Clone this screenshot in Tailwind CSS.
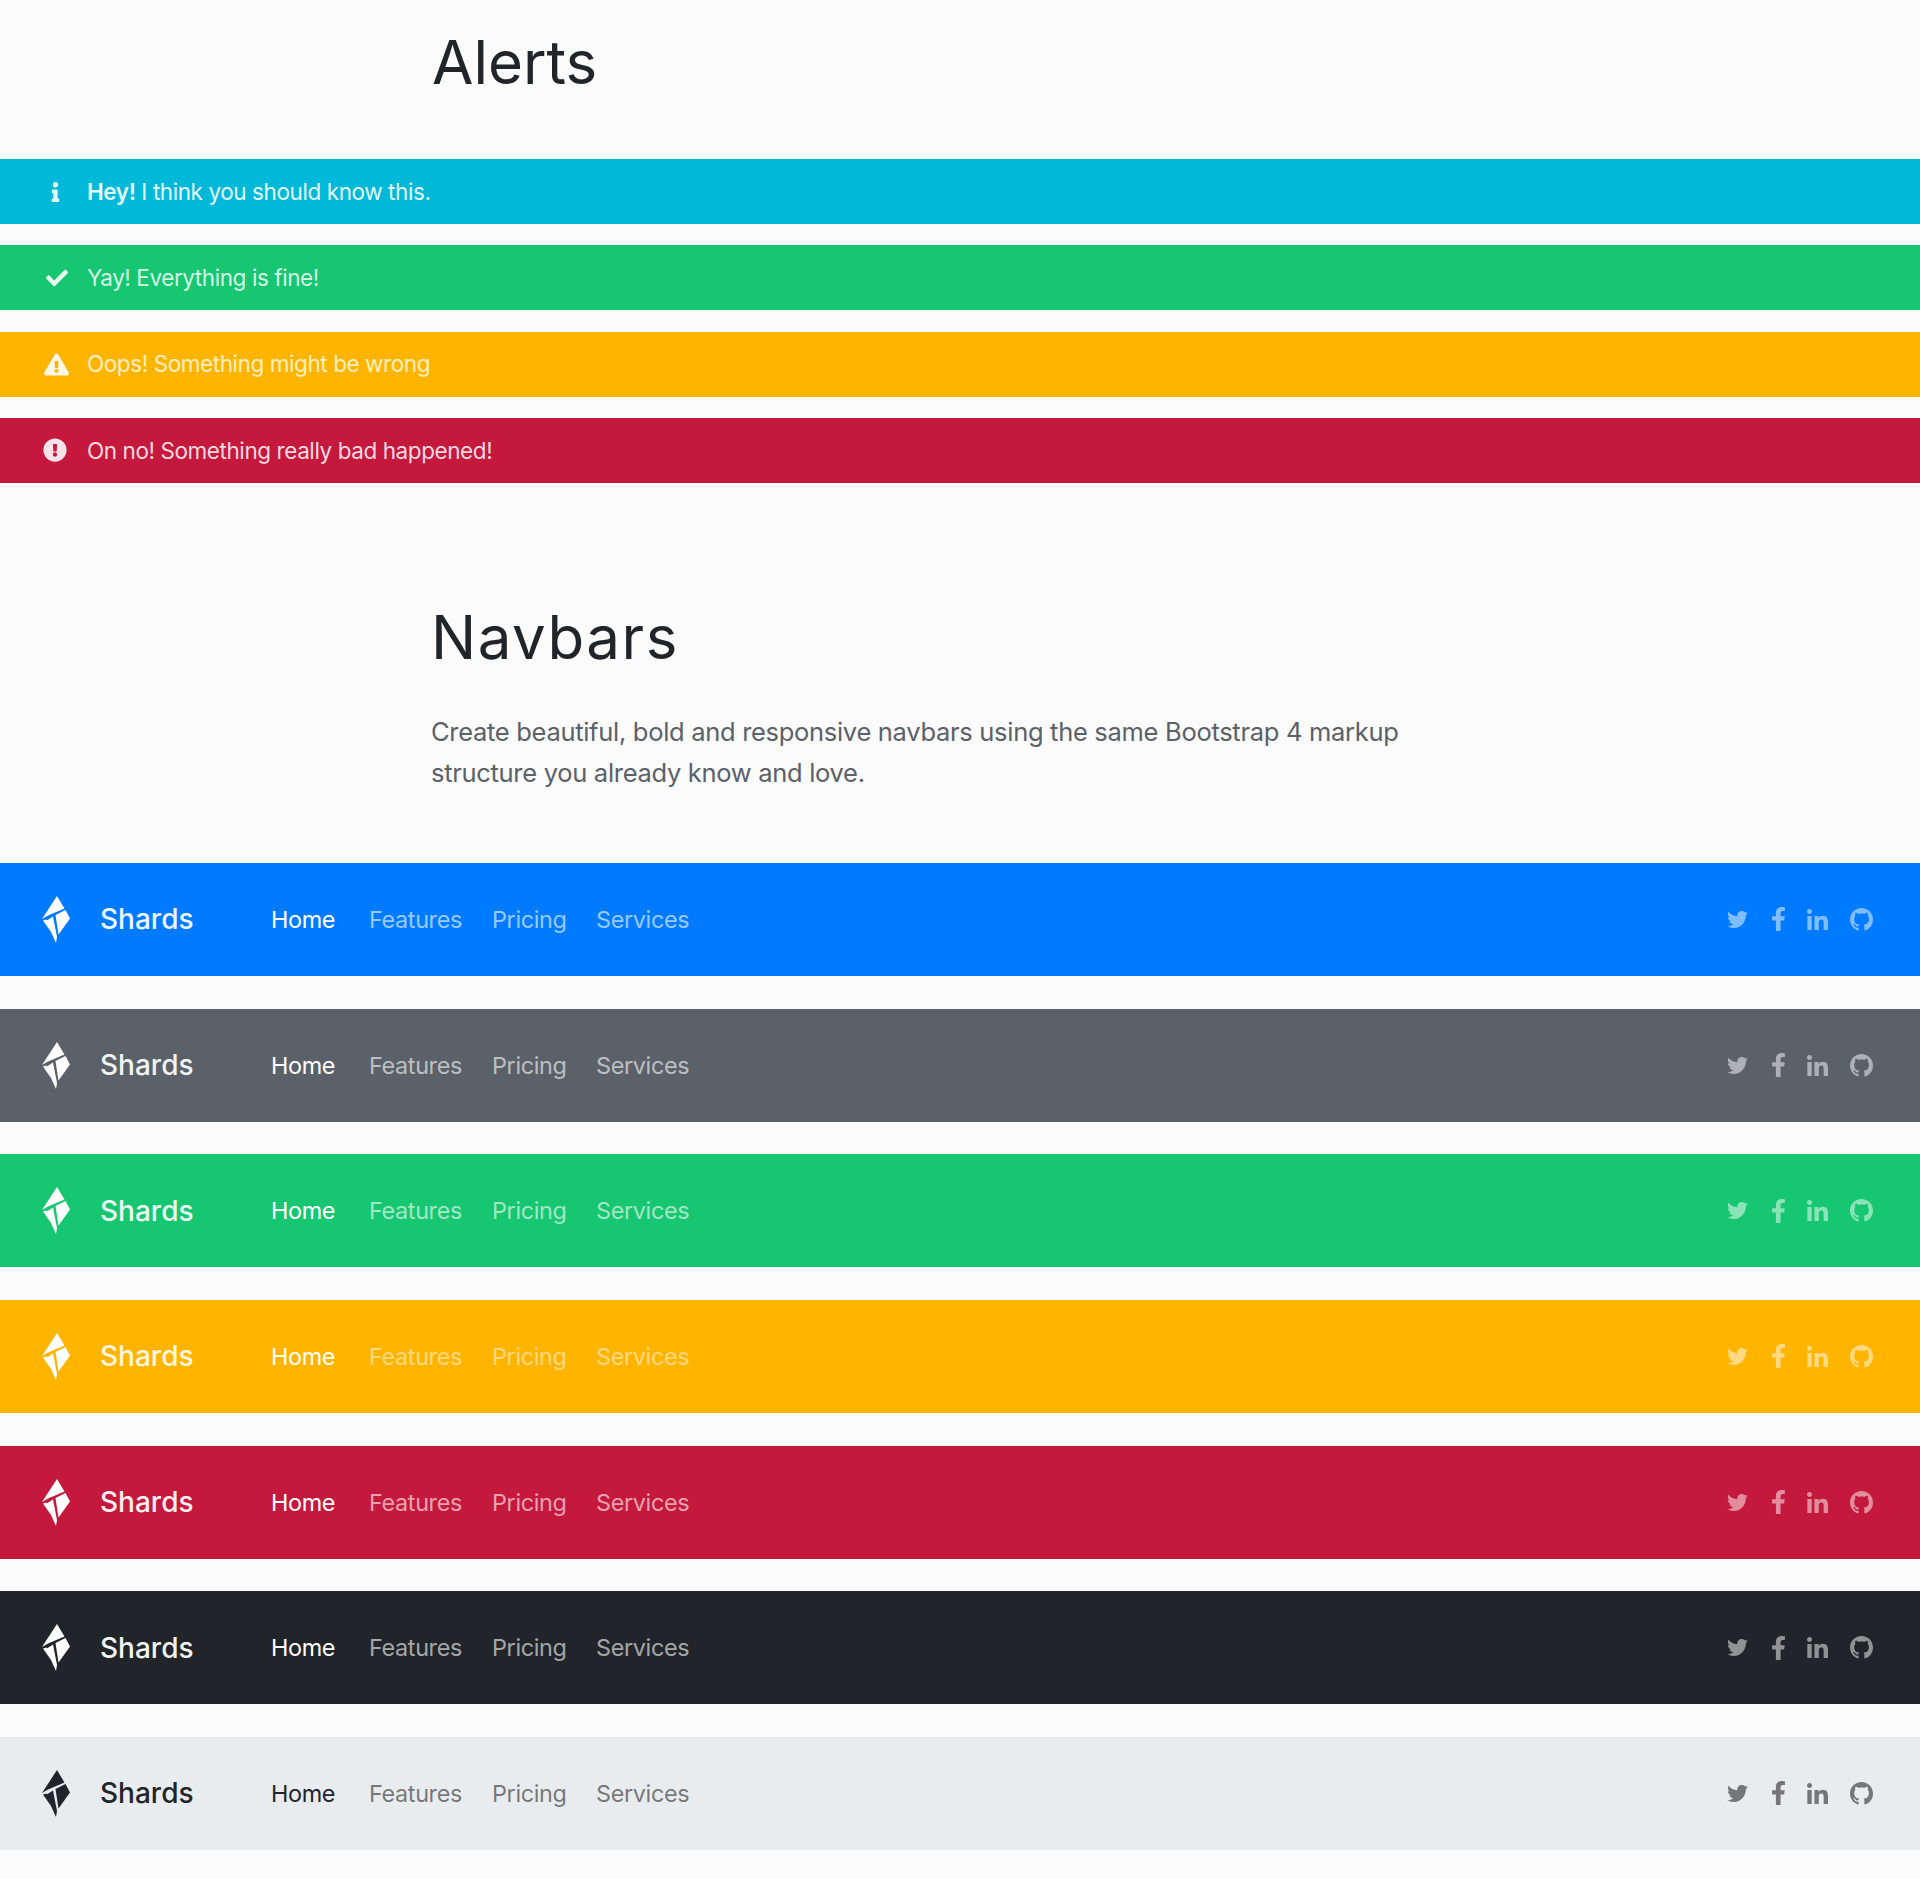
<!DOCTYPE html>
<html lang="en">
<head>
  <meta charset="UTF-8" />
  <title>Shards - Alerts and Navbars</title>
  <script src="https://cdn.jsdelivr.net/npm/@tailwindcss/browser@4"></script>
</head>
<body class="bg-[#fbfbfb] font-['Inter',sans-serif] h-[1879px] overflow-hidden">

<svg class="hidden">
  <symbol id="logo" viewBox="0 0 28 47">
    <path d="M15 0L22.5 12.5L6 19.5L0 23Z"/>
    <path d="M23.5 14L28 22.5L16.5 38.5L13.5 19Z"/>
    <path d="M11 20.5L15 41L14 47L4 25Z"/>
    <path d="M1 24.5L4.5 23.5L9 36Z"/>
  </symbol>
  <symbol id="twitter" viewBox="0 0 512 512"><path d="M459.37 151.716c.325 4.548.325 9.097.325 13.645 0 138.72-105.583 298.558-298.558 298.558-59.452 0-114.68-17.219-161.137-47.106 8.447.974 16.568 1.299 25.34 1.299 49.055 0 94.213-16.568 130.274-44.832-46.132-.975-84.792-31.188-98.112-72.772 6.498.974 12.995 1.624 19.818 1.624 9.421 0 18.843-1.3 27.614-3.573-48.081-9.747-84.143-51.98-84.143-102.985v-1.299c13.969 7.797 30.214 12.67 47.431 13.319-28.264-18.843-46.781-51.005-46.781-87.391 0-19.492 5.197-37.36 14.294-52.954 51.655 63.675 129.3 105.258 216.365 109.807-1.624-7.797-2.599-15.918-2.599-24.04 0-57.828 46.782-104.934 104.934-104.934 30.213 0 57.502 12.67 76.67 33.137 23.715-4.548 46.456-13.32 66.599-25.34-7.798 24.366-24.366 44.833-46.132 57.827 21.117-2.273 41.584-8.122 60.426-16.243-14.292 20.791-32.161 39.308-52.628 54.253z"/></symbol>
  <symbol id="facebook" viewBox="0 0 320 512"><path d="M279.14 288l14.22-92.66h-88.91v-60.13c0-25.35 12.42-50.06 52.24-50.06h40.42V6.26S260.43 0 225.36 0c-73.22 0-121.08 44.38-121.08 124.72v70.62H22.89V288h81.39v224h100.17V288z"/></symbol>
  <symbol id="linkedin" viewBox="0 0 448 448"><path d="M100.28 448H7.4V148.9h92.88zM53.79 108.1C24.09 108.1 0 83.5 0 53.8a53.79 53.79 0 0 1 107.58 0c0 29.7-24.1 54.3-53.79 54.3zM447.9 448h-92.68V302.4c0-34.7-.7-79.2-48.29-79.2-48.29 0-55.69 37.7-55.69 76.7V448h-92.78V148.9h89.08v40.8h1.3c12.4-23.5 42.69-48.3 87.88-48.3 94 0 111.28 61.9 111.28 142.3V448z"/></symbol>
  <symbol id="github" viewBox="0 0 16 16"><path d="M8 0C3.58 0 0 3.58 0 8c0 3.54 2.29 6.53 5.47 7.59.4.07.55-.17.55-.38 0-.19-.01-.82-.01-1.49-2.01.37-2.53-.49-2.69-.94-.09-.23-.48-.94-.82-1.13-.28-.15-.68-.52-.01-.53.63-.01 1.08.58 1.23.82.72 1.21 1.87.87 2.33.66.07-.52.28-.87.51-1.07-1.78-.2-3.64-.89-3.64-3.95 0-.87.31-1.59.82-2.15-.08-.2-.36-1.02.08-2.12 0 0 .67-.21 2.2.82.64-.18 1.32-.27 2-.27.68 0 1.36.09 2 .27 1.53-1.04 2.2-.82 2.2-.82.44 1.1.16 1.92.08 2.12.51.56.82 1.27.82 2.15 0 3.07-1.87 3.75-3.65 3.95.29.25.54.73.54 1.48 0 1.07-.01 1.93-.01 2.2 0 .21.15.46.55.38A8.013 8.013 0 0016 8c0-4.42-3.58-8-8-8z"/></symbol>
</svg>

<!-- Alerts -->
<h1 class="pl-[432px] pt-[26px] h-[159px] text-[60px] leading-[72px] text-[#212529]">Alerts</h1>

<div class="flex flex-col gap-[21.33px] text-[22.5px] tracking-[-0.42px]">
  <div class="h-[65px] bg-[#00b8d8] text-[#e6f9fc] flex items-center">
    <div class="w-[87px] pl-[50px]">
      <svg class="w-[11px] h-[20px] fill-[#e6f9fc]" viewBox="0 0 192 512"><path d="M20 424.229h20V279.771H20c-11.046 0-20-8.954-20-20V212c0-11.046 8.954-20 20-20h112c11.046 0 20 8.954 20 20v212.229h20c11.046 0 20 8.954 20 20V492c0 11.046-8.954 20-20 20H20c-11.046 0-20-8.954-20-20v-47.771c0-11.046 8.954-20 20-20zM96 0C56.235 0 24 32.235 24 72s32.235 72 72 72 72-32.235 72-72S135.764 0 96 0z"/></svg>
    </div>
    <p><strong class="font-semibold">Hey!</strong> I think you should know this.</p>
  </div>
  <div class="h-[65px] bg-[#17c671] text-[#d5f6e5] flex items-center">
    <div class="w-[87px] pl-[46px]">
      <svg class="w-[22px] h-[22px] fill-[#e8fbf1]" viewBox="0 0 512 512"><path d="M173.898 439.404l-166.4-166.4c-9.997-9.997-9.997-26.206 0-36.204l36.203-36.204c9.997-9.998 26.207-9.998 36.204 0L192 312.69 432.095 72.596c9.997-9.997 26.207-9.997 36.204 0l36.203 36.204c9.997 9.997 9.997 26.206 0 36.204l-294.4 294.401c-9.998 9.997-26.207 9.997-36.204-.001z"/></svg>
    </div>
    <p>Yay! Everything is fine!</p>
  </div>
  <div class="h-[65px] bg-[#ffb400] text-[#fff0c4] flex items-center">
    <div class="w-[87px] pl-[44px]">
      <svg class="w-[25px] h-[23px] fill-[#fff8e6]" viewBox="0 0 576 512"><path d="M569.517 440.013C587.975 472.007 564.806 512 527.94 512H48.054c-36.937 0-59.999-40.055-41.577-71.987L246.423 24.035c18.467-32.009 64.72-31.951 83.154 0l239.94 416.178zM288 354c-25.405 0-46 20.595-46 46s20.595 46 46 46 46-20.595 46-46-20.595-46-46-46zm-43.673-165.346l7.418 136c.347 6.364 5.609 11.346 11.982 11.346h48.546c6.373 0 11.635-4.982 11.982-11.346l7.418-136c.375-6.874-5.098-12.654-11.982-12.654h-63.383c-6.884 0-12.356 5.78-11.981 12.654z"/></svg>
    </div>
    <p>Oops! Something might be wrong</p>
  </div>
  <div class="h-[65px] bg-[#c4183c] text-[#f9d9e0] flex items-center">
    <div class="w-[87px] pl-[43px]">
      <svg class="w-[24px] h-[24px] fill-[#f9e3e8]" viewBox="0 0 512 512"><path d="M504 256c0 136.997-111.043 248-248 248S8 392.997 8 256C8 119.083 119.043 8 256 8s248 111.083 248 248zm-248 50c-25.405 0-46 20.595-46 46s20.595 46 46 46 46-20.595 46-46-20.595-46-46-46zm-43.673-165.346l7.418 136c.347 6.364 5.609 11.346 11.982 11.346h48.546c6.373 0 11.635-4.982 11.982-11.346l7.418-136c.375-6.874-5.098-12.654-11.982-12.654h-63.383c-6.884 0-12.356 5.78-11.981 12.654z"/></svg>
    </div>
    <p>On no! Something really bad happened!</p>
  </div>
</div>

<!-- Navbars intro -->
<section class="pl-[431px] pt-[118px] h-[380px]">
  <h1 class="text-[60px] leading-[72px] text-[#212529] tracking-[1.5px]">Navbars</h1>
  <p class="mt-[38px] w-[1000px] text-[25.5px] leading-[41px] text-[#5a6169] tracking-[-0.3px]">Create beautiful, bold and responsive navbars using the same Bootstrap 4 markup<br>structure you already know and love.</p>
</section>

<div class="flex flex-col gap-[32.67px]">
  <!-- Primary -->
  <nav class="h-[113px] bg-[#007bff] flex items-center text-white">
    <svg class="ml-[42px] w-[28px] h-[47px] fill-white"><use href="#logo"/></svg>
    <a class="ml-[30px] w-[171px] text-[28px] font-medium text-[#eef6ff]">Shards</a>
    <ul class="flex items-center text-[23.4px] tracking-[-0.35px] text-white/60">
      <li class="w-[98px] text-white">Home</li>
      <li class="w-[123px]">Features</li>
      <li class="w-[104px]">Pricing</li>
      <li>Services</li>
    </ul>
    <div class="ml-auto mr-[47px] flex items-center fill-white/50">
      <svg class="w-[21px] h-[21px]"><use href="#twitter"/></svg>
      <svg class="ml-[23px] w-[15px] h-[24px]"><use href="#facebook"/></svg>
      <svg class="ml-[20px] w-[23px] h-[21px]"><use href="#linkedin"/></svg>
      <svg class="ml-[21px] w-[23px] h-[23px]"><use href="#github"/></svg>
    </div>
  </nav>
  <!-- Secondary -->
  <nav class="h-[113px] bg-[#5a6169] flex items-center text-white">
    <svg class="ml-[42px] w-[28px] h-[47px] fill-white"><use href="#logo"/></svg>
    <a class="ml-[30px] w-[171px] text-[28px] font-medium text-[#f3f4f5]">Shards</a>
    <ul class="flex items-center text-[23.4px] tracking-[-0.35px] text-white/60">
      <li class="w-[98px] text-white">Home</li>
      <li class="w-[123px]">Features</li>
      <li class="w-[104px]">Pricing</li>
      <li>Services</li>
    </ul>
    <div class="ml-auto mr-[47px] flex items-center fill-white/50">
      <svg class="w-[21px] h-[21px]"><use href="#twitter"/></svg>
      <svg class="ml-[23px] w-[15px] h-[24px]"><use href="#facebook"/></svg>
      <svg class="ml-[20px] w-[23px] h-[21px]"><use href="#linkedin"/></svg>
      <svg class="ml-[21px] w-[23px] h-[23px]"><use href="#github"/></svg>
    </div>
  </nav>
  <!-- Success -->
  <nav class="h-[113px] bg-[#17c671] flex items-center text-white">
    <svg class="ml-[42px] w-[28px] h-[47px] fill-white"><use href="#logo"/></svg>
    <a class="ml-[30px] w-[171px] text-[28px] font-medium text-[#eefbf4]">Shards</a>
    <ul class="flex items-center text-[23.4px] tracking-[-0.35px] text-white/60">
      <li class="w-[98px] text-white">Home</li>
      <li class="w-[123px]">Features</li>
      <li class="w-[104px]">Pricing</li>
      <li>Services</li>
    </ul>
    <div class="ml-auto mr-[47px] flex items-center fill-white/50">
      <svg class="w-[21px] h-[21px]"><use href="#twitter"/></svg>
      <svg class="ml-[23px] w-[15px] h-[24px]"><use href="#facebook"/></svg>
      <svg class="ml-[20px] w-[23px] h-[21px]"><use href="#linkedin"/></svg>
      <svg class="ml-[21px] w-[23px] h-[23px]"><use href="#github"/></svg>
    </div>
  </nav>
  <!-- Warning -->
  <nav class="h-[113px] bg-[#ffb400] flex items-center text-white">
    <svg class="ml-[42px] w-[28px] h-[47px] fill-white"><use href="#logo"/></svg>
    <a class="ml-[30px] w-[171px] text-[28px] font-medium text-[#fff7e2]">Shards</a>
    <ul class="flex items-center text-[23.4px] tracking-[-0.35px] text-white/50">
      <li class="w-[98px] text-white">Home</li>
      <li class="w-[123px]">Features</li>
      <li class="w-[104px]">Pricing</li>
      <li>Services</li>
    </ul>
    <div class="ml-auto mr-[47px] flex items-center fill-white/50">
      <svg class="w-[21px] h-[21px]"><use href="#twitter"/></svg>
      <svg class="ml-[23px] w-[15px] h-[24px]"><use href="#facebook"/></svg>
      <svg class="ml-[20px] w-[23px] h-[21px]"><use href="#linkedin"/></svg>
      <svg class="ml-[21px] w-[23px] h-[23px]"><use href="#github"/></svg>
    </div>
  </nav>
  <!-- Danger -->
  <nav class="h-[113px] bg-[#c4183c] flex items-center text-white">
    <svg class="ml-[42px] w-[28px] h-[47px] fill-white"><use href="#logo"/></svg>
    <a class="ml-[30px] w-[171px] text-[28px] font-medium text-[#fbeef1]">Shards</a>
    <ul class="flex items-center text-[23.4px] tracking-[-0.35px] text-white/60">
      <li class="w-[98px] text-white">Home</li>
      <li class="w-[123px]">Features</li>
      <li class="w-[104px]">Pricing</li>
      <li>Services</li>
    </ul>
    <div class="ml-auto mr-[47px] flex items-center fill-white/50">
      <svg class="w-[21px] h-[21px]"><use href="#twitter"/></svg>
      <svg class="ml-[23px] w-[15px] h-[24px]"><use href="#facebook"/></svg>
      <svg class="ml-[20px] w-[23px] h-[21px]"><use href="#linkedin"/></svg>
      <svg class="ml-[21px] w-[23px] h-[23px]"><use href="#github"/></svg>
    </div>
  </nav>
  <!-- Dark -->
  <nav class="h-[113px] bg-[#212529] flex items-center text-white">
    <svg class="ml-[42px] w-[28px] h-[47px] fill-white"><use href="#logo"/></svg>
    <a class="ml-[30px] w-[171px] text-[28px] font-medium text-[#f3f4f5]">Shards</a>
    <ul class="flex items-center text-[23.4px] tracking-[-0.35px] text-white/60">
      <li class="w-[98px] text-white">Home</li>
      <li class="w-[123px]">Features</li>
      <li class="w-[104px]">Pricing</li>
      <li>Services</li>
    </ul>
    <div class="ml-auto mr-[47px] flex items-center fill-white/50">
      <svg class="w-[21px] h-[21px]"><use href="#twitter"/></svg>
      <svg class="ml-[23px] w-[15px] h-[24px]"><use href="#facebook"/></svg>
      <svg class="ml-[20px] w-[23px] h-[21px]"><use href="#linkedin"/></svg>
      <svg class="ml-[21px] w-[23px] h-[23px]"><use href="#github"/></svg>
    </div>
  </nav>
  <!-- Light -->
  <nav class="h-[113px] bg-[#e9ecef] flex items-center text-[#212529]">
    <svg class="ml-[42px] w-[28px] h-[47px] fill-[#212529]"><use href="#logo"/></svg>
    <a class="ml-[30px] w-[171px] text-[28px] font-medium">Shards</a>
    <ul class="flex items-center text-[23.4px] tracking-[-0.35px] text-black/50">
      <li class="w-[98px] text-[#212529]">Home</li>
      <li class="w-[123px]">Features</li>
      <li class="w-[104px]">Pricing</li>
      <li>Services</li>
    </ul>
    <div class="ml-auto mr-[47px] flex items-center fill-black/50">
      <svg class="w-[21px] h-[21px]"><use href="#twitter"/></svg>
      <svg class="ml-[23px] w-[15px] h-[24px]"><use href="#facebook"/></svg>
      <svg class="ml-[20px] w-[23px] h-[21px]"><use href="#linkedin"/></svg>
      <svg class="ml-[21px] w-[23px] h-[23px]"><use href="#github"/></svg>
    </div>
  </nav>
</div>

</body>
</html>
